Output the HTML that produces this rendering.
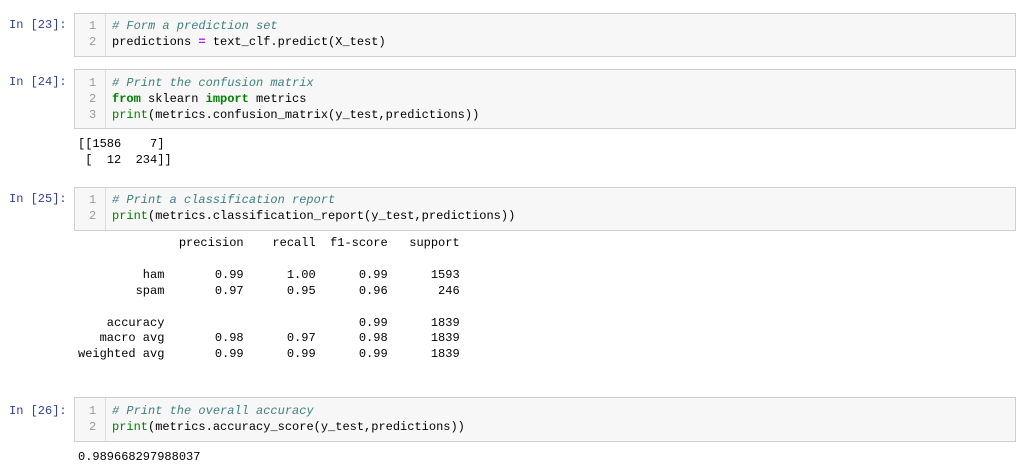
<!DOCTYPE html>
<html><head><style>
body{margin:0;width:1024px;height:475px;background:#fff;position:relative;overflow:hidden;font-family:"Liberation Mono",monospace;font-size:12px;}
.p{position:absolute;left:9px;color:#303f9f;font-size:12px;line-height:16px}
.box{position:absolute;left:74px;width:942px;background:#f7f7f7;border:1px solid #cfcfcf;box-sizing:border-box}
.gut{position:absolute;left:0;top:0;bottom:0;width:30px;border-right:1px solid #ddd;}
.ln{position:absolute;left:14px;color:#999;line-height:16px;white-space:pre}
.code{position:absolute;left:37px;color:#000;line-height:16px;white-space:pre}
.c{color:#408080;font-style:italic}
.k{color:#008000;font-weight:bold}
.b{color:#008000}
.o{color:#aa22ff;font-weight:bold}
.out{position:absolute;left:78px;line-height:16px;white-space:pre;color:#000}
</style></head><body>
<div class="p" style="top:17px">In [23]:</div>
<div class="box" style="top:13px;height:44px"><div class="gut"></div>
<div class="ln" style="top:4px">1
2</div>
<div class="code" style="top:4px"><span class="c"># Form a prediction set</span>
predictions <span class="o">=</span> text_clf.predict(X_test)</div></div>

<div class="p" style="top:74px">In [24]:</div>
<div class="box" style="top:69px;height:60px"><div class="gut"></div>
<div class="ln" style="top:5px">1
2
3</div>
<div class="code" style="top:5px"><span class="c"># Print the confusion matrix</span>
<span class="k">from</span> sklearn <span class="k">import</span> metrics
<span class="b">print</span>(metrics.confusion_matrix(y_test,predictions))</div></div>
<div class="out" style="top:136px">[[1586    7]
 [  12  234]]</div>

<div class="p" style="top:191px">In [25]:</div>
<div class="box" style="top:187px;height:44px"><div class="gut"></div>
<div class="ln" style="top:4px">1
2</div>
<div class="code" style="top:4px"><span class="c"># Print a classification report</span>
<span class="b">print</span>(metrics.classification_report(y_test,predictions))</div></div>
<div class="out" style="top:236px;line-height:15.9px">              precision    recall  f1-score   support

         ham       0.99      1.00      0.99      1593
        spam       0.97      0.95      0.96       246

    accuracy                           0.99      1839
   macro avg       0.98      0.97      0.98      1839
weighted avg       0.99      0.99      0.99      1839</div>

<div class="p" style="top:403px">In [26]:</div>
<div class="box" style="top:397px;height:45px"><div class="gut"></div>
<div class="ln" style="top:5px">1
2</div>
<div class="code" style="top:5px"><span class="c"># Print the overall accuracy</span>
<span class="b">print</span>(metrics.accuracy_score(y_test,predictions))</div></div>
<div class="out" style="top:449px">0.989668297988037</div>
</body></html>
